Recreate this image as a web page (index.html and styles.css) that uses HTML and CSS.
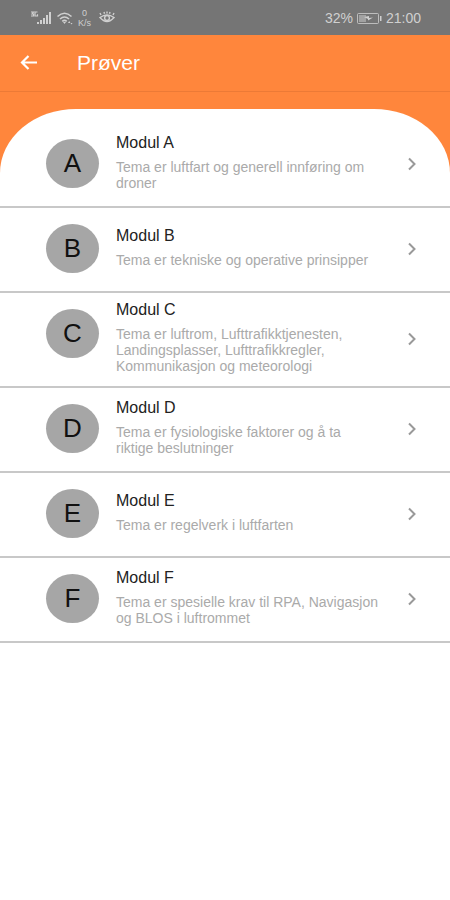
FILE: index.html
```html
<!DOCTYPE html>
<html lang="no">
<head>
    <meta charset="UTF-8">
    <meta name="viewport" content="width=device-width, initial-scale=1.0">
    <title>Prøver</title>
    <link rel="stylesheet" href="styles.css">
</head>
<body>
    <div class="status-bar">
        <div class="status-group">
            <svg class="icon" width="22" height="14" viewBox="0 0 22 14">
                <path d="M1 1h2.500L2 3h1.500v2H1M7.500 1H5v4h2.500V3.200" fill="none" stroke="currentColor" stroke-width="1.200"/>
                <path d="M7 11h2v2H7zM10 9h2v4h-2zM13 7h2v6h-2zM16 4h2v9h-2zM19 1h2v12h-2z" fill="currentColor"/>
            </svg>
            <svg class="icon" width="18" height="14" viewBox="0 0 18 14">
                <path d="M1.500 5.500Q8.500-1 15.500 5.500M4 8q4.500-4 9 0M6.300 10.300q2.200-2 4.400 0" fill="none" stroke="currentColor" stroke-width="1.600"/>
                <path d="M7 11h3l-1.500 2zM12 12l1.200-2 1.200 2zM14.500 12h2l-1 1.500z" fill="currentColor"/>
            </svg>
            <span class="net-speed"><span>0</span><span>K/s</span></span>
            <svg class="icon" width="16" height="14" viewBox="0 0 16 14">
                <path d="M1 6.500Q8 1.500 15 6.500Q8 14.500 1 6.500zM2 4L1 2M5.500 2.800L5 1M8 2.500V.5M10.500 2.800L11 1M14 4l1-2" fill="none" stroke="currentColor" stroke-width="1.400"/>
                <circle cx="8" cy="7" r="2.400" fill="none" stroke="currentColor" stroke-width="1.400"/>
            </svg>
        </div>
        <div class="status-group">
            <span>32%</span>
            <svg class="icon" width="25" height="11" viewBox="0 0 25 11">
                <rect x=".5" y=".5" width="21" height="10" rx="1" fill="none" stroke="currentColor" opacity=".8"/>
                <path d="M2 2h7v7H2z" fill="currentColor" opacity=".5"/>
                <path d="M7 4l5-1v2l4-.5-5 3V6z" fill="currentColor"/>
                <path d="M23 3h1.500v5H23z" fill="currentColor"/>
            </svg>
            <span>21:00</span>
        </div>
    </div>

    <header class="app-bar">
        <button class="back-button" type="button" aria-label="Tilbake">
            <svg class="icon" width="18" height="16" viewBox="0 0 18 16">
                <path d="M17 7.500H2M8.500 1L2 7.500l6.500 6.500" fill="none" stroke="currentColor" stroke-width="2.200"/>
            </svg>
        </button>
        <h1 class="app-title">Prøver</h1>
    </header>

    <main class="content">
        <ul class="module-list">
            <li>
                <a class="module" href="#a">
                    <span class="avatar">A</span>
                    <span class="module-text">
                        <span class="module-name">Modul A</span>
                        <span class="module-info">Tema er luftfart og generell innføring om droner</span>
                    </span>
                    <svg class="chevron" width="10" height="14" viewBox="0 0 10 14"><path d="M2 1.500L7.500 7 2 12.500"/></svg>
                </a>
            </li>
            <li>
                <a class="module" href="#b">
                    <span class="avatar">B</span>
                    <span class="module-text">
                        <span class="module-name">Modul B</span>
                        <span class="module-info">Tema er tekniske og operative prinsipper</span>
                    </span>
                    <svg class="chevron" width="10" height="14" viewBox="0 0 10 14"><path d="M2 1.500L7.500 7 2 12.500"/></svg>
                </a>
            </li>
            <li>
                <a class="module" href="#c">
                    <span class="avatar">C</span>
                    <span class="module-text">
                        <span class="module-name">Modul C</span>
                        <span class="module-info">Tema er luftrom, Lufttrafikktjenesten, Landingsplasser, Lufttrafikkregler, Kommunikasjon og meteorologi</span>
                    </span>
                    <svg class="chevron" width="10" height="14" viewBox="0 0 10 14"><path d="M2 1.500L7.500 7 2 12.500"/></svg>
                </a>
            </li>
            <li>
                <a class="module" href="#d">
                    <span class="avatar">D</span>
                    <span class="module-text">
                        <span class="module-name">Modul D</span>
                        <span class="module-info">Tema er fysiologiske faktorer og å ta riktige beslutninger</span>
                    </span>
                    <svg class="chevron" width="10" height="14" viewBox="0 0 10 14"><path d="M2 1.500L7.500 7 2 12.500"/></svg>
                </a>
            </li>
            <li>
                <a class="module" href="#e">
                    <span class="avatar">E</span>
                    <span class="module-text">
                        <span class="module-name">Modul E</span>
                        <span class="module-info">Tema er regelverk i luftfarten</span>
                    </span>
                    <svg class="chevron" width="10" height="14" viewBox="0 0 10 14"><path d="M2 1.500L7.500 7 2 12.500"/></svg>
                </a>
            </li>
            <li>
                <a class="module" href="#f">
                    <span class="avatar">F</span>
                    <span class="module-text">
                        <span class="module-name">Modul F</span>
                        <span class="module-info">Tema er spesielle krav til RPA, Navigasjon og BLOS i luftrommet</span>
                    </span>
                    <svg class="chevron" width="10" height="14" viewBox="0 0 10 14"><path d="M2 1.500L7.500 7 2 12.500"/></svg>
                </a>
            </li>
        </ul>
    </main>
</body>
</html>
```

FILE: styles.css
```css
* {
    box-sizing: border-box;
}

body {
    margin: 0;
    min-height: 100vh;
    display: flex;
    flex-direction: column;
    background-color: #ff863c;
    font-family: "Liberation Sans", Arial, sans-serif;
}

.icon {
    display: block;
    flex: none;
}

.status-bar {
    display: flex;
    justify-content: space-between;
    align-items: center;
    height: 35px;
    padding: 1px 29px 0 30px;
    background-color: #757575;
    color: #d0d0d0;
    font-size: 14px;
}

.status-group {
    display: flex;
    align-items: center;
    gap: 4px;
}

.net-speed {
    display: flex;
    flex-direction: column;
    align-items: center;
    font-size: 9px;
    line-height: 10px;
    margin-right: 4px;
}

.app-bar {
    display: flex;
    align-items: center;
    height: 57px;
    padding: 0 20px;
    border-bottom: 1px solid #ec7a36;
    color: #fff;
}

.back-button {
    padding: 0;
    border: none;
    background: none;
    color: inherit;
    cursor: pointer;
}

.app-title {
    margin: 0 0 0 39px;
    font-size: 21px;
    font-weight: normal;
}

.content {
    flex: 1;
    margin-top: 17px;
    padding-top: 14px;
    background-color: #fff;
    border-radius: 76px 76px 0 0 / 64px 64px 0 0;
}

.module-list {
    margin: 0;
    padding: 0;
    list-style: none;
}

.module {
    display: flex;
    align-items: center;
    min-height: 85px;
    padding: 7px 33px 9px 46px;
    border-bottom: 2px solid #c8c8c8;
    color: #222;
    text-decoration: none;
}

.avatar {
    display: flex;
    align-self: flex-start;
    align-items: center;
    justify-content: center;
    flex: none;
    width: 53px;
    height: 49px;
    margin-top: 9px;
    border-radius: 50%;
    background-color: #a6a6a6;
    color: #111;
    font-size: 26px;
}

.module-text {
    display: flex;
    flex: 1;
    flex-direction: column;
    gap: 6px;
    margin: 0 27px 0 17px;
    padding-bottom: 3px;
}

.module-name {
    font-size: 16px;
    line-height: 20px;
}

.module-info {
    color: #aaa;
    font-size: 14px;
    line-height: 16px;
}

.chevron {
    flex: none;
    fill: none;
    stroke: #999;
    stroke-width: 2;
}
```
